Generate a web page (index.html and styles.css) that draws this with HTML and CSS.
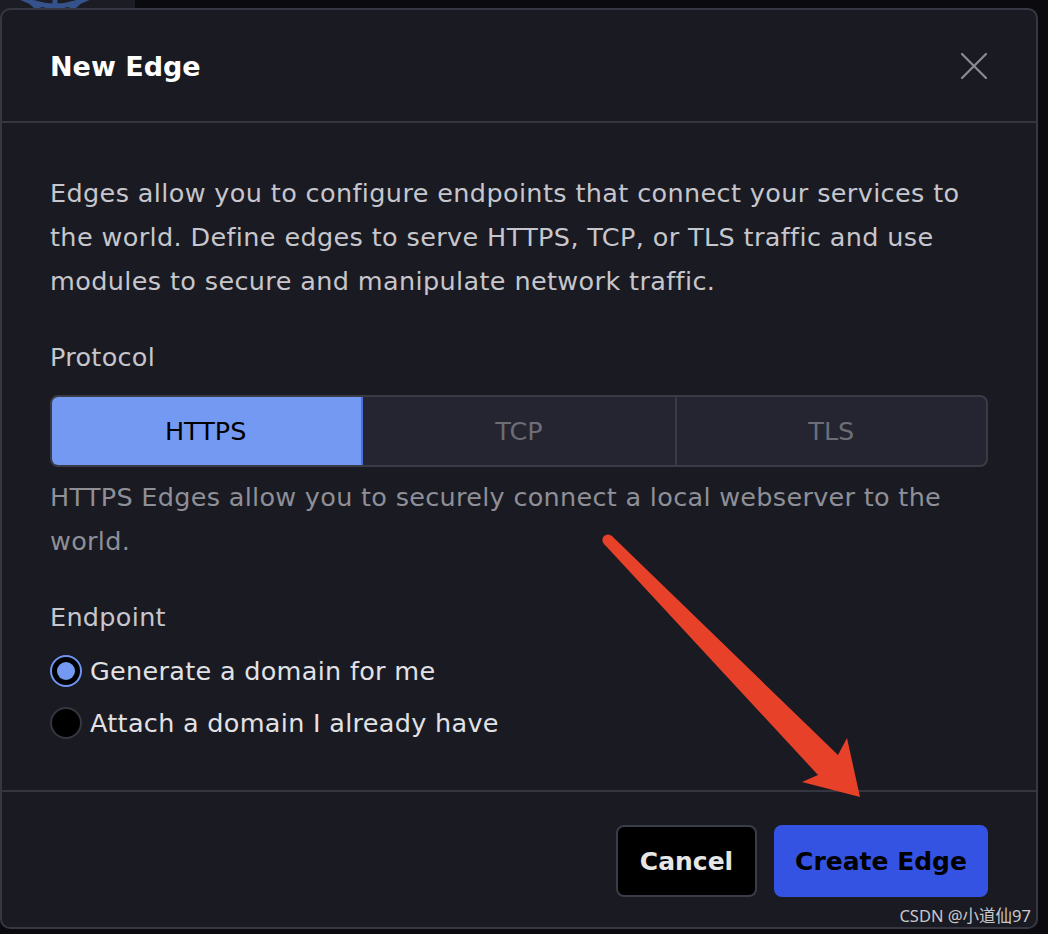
FILE: index.html
```html
<!DOCTYPE html>
<html lang="en">
<head>
<meta charset="utf-8">
<title>New Edge</title>
<link rel="stylesheet" href="styles.css">
</head>
<body>
<div class="backdrop-left">
  <svg class="bg-logo" width="120" height="10" viewBox="0 0 120 10">
    <path d="M22 -6 L40 10 M55 -14 L55 10 M88 -6 L70 10 M18 -4 Q55 16 92 -4" stroke="#35528a" stroke-width="5" fill="none"/>
  </svg>
</div>
<div class="modal">
  <header class="modal-header">
    <h1 class="title">New Edge</h1>
    <svg class="close" width="26" height="26" viewBox="0 0 26 26">
      <path d="M1 1 L25 25 M25 1 L1 25" stroke="#8b8b91" stroke-width="2.2" stroke-linecap="round"/>
    </svg>
  </header>
  <section class="modal-body">
    <p class="intro">Edges allow you to configure endpoints that connect your services to the world. Define edges to serve HTTPS, TCP, or TLS traffic and use modules to secure and manipulate network traffic.</p>
    <div class="label">Protocol</div>
    <div class="segmented">
      <div class="seg seg-active">HTTPS</div>
      <div class="seg">TCP</div>
      <div class="seg">TLS</div>
    </div>
    <p class="help">HTTPS Edges allow you to securely connect a local webserver to the world.</p>
    <div class="label label-endpoint">Endpoint</div>
    <div class="radio-list">
      <div class="radio-row">
        <span class="radio radio-on"><span class="dot"></span></span>
        <span class="radio-text">Generate a domain for me</span>
      </div>
      <div class="radio-row">
        <span class="radio"></span>
        <span class="radio-text">Attach a domain I already have</span>
      </div>
    </div>
  </section>
  <footer class="modal-footer">
    <button class="btn btn-cancel">Cancel</button>
    <button class="btn btn-primary">Create Edge</button>
  </footer>
</div>
<div class="watermark">CSDN @小道仙97</div>
<svg class="arrow" width="1048" height="934" viewBox="0 0 1048 934">
  <circle cx="608" cy="540" r="5.6" fill="#e8412a"/>
  <polygon points="611.9,536 838,755 847,738 860,797 802,782 818,775 604.1,544" fill="#e8412a"/>
</svg>
</body>
</html>
```
FILE: styles.css
```css
* { box-sizing: border-box; }
html, body { margin: 0; padding: 0; }
body {
  width: 1048px;
  height: 934px;
  overflow: hidden;
  background: #0b0b0f;
  font-family: "DejaVu Sans", "Noto Sans", sans-serif;
  position: relative;
  padding-top: 8px;
}
.backdrop-left {
  position: absolute;
  left: 0; top: 0;
  width: 135px; height: 20px;
  background: #1b1c24;
}
.bg-logo { position: absolute; left: 0; top: 0; }
.modal {
  position: relative;
  width: 1038px;
  height: 921px;
  background: #1a1a22;
  border: 2px solid #353742;
  border-radius: 10px;
  display: flex;
  flex-direction: column;
}
.modal-header {
  height: 113px;
  flex: none;
  display: flex;
  align-items: center;
  justify-content: space-between;
  padding: 2px 49px 0 48px;
  border-bottom: 2px solid #33353f;
}
.title {
  margin: 0;
  font-size: 27px;
  font-weight: 700;
  color: #ffffff;
}
.close { display: block; margin-top: -2px; }
.modal-body {
  flex: 1;
  padding: 48px 48px 0 48px;
  border-bottom: 2px solid #33353f;
}
.intro {
  margin: 0;
  font-size: 25.5px;
  line-height: 44px;
  letter-spacing: 0.37px;
  color: #c6c6cc;
}
.label {
  margin-top: 32px;
  font-size: 25.5px;
  line-height: 44px;
  letter-spacing: 0.3px;
  color: #c6c6cc;
}
.segmented {
  margin-top: 16px;
  height: 72px;
  display: grid;
  grid-template-columns: 1fr 1fr 1fr;
  border: 2px solid #393b47;
  border-radius: 8px;
  background: #242530;
  overflow: hidden;
}
.seg {
  display: flex;
  align-items: center;
  justify-content: center;
  font-size: 25.5px;
  color: #6c6d77;
}
.seg + .seg { border-left: 2px solid #393b47; }
.seg-active {
  background: #7399f2;
  color: #000000;
  border-right: 2px solid #4d6fd8;
  margin: -2px 0 -2px -2px;
}
.seg-active + .seg { border-left: none; }
.help {
  margin: 8px 0 0 0;
  font-size: 25.5px;
  line-height: 44px;
  letter-spacing: 0.3px;
  color: #8e8f97;
}
.label-endpoint { margin-top: 32px; }
.radio-list {
  margin-top: 6px;
  display: flex;
  flex-direction: column;
}
.radio-row {
  height: 52px;
  display: flex;
  align-items: center;
  gap: 8px;
}
.radio {
  width: 32px;
  height: 32px;
  border-radius: 50%;
  background: #000000;
  border: 2px solid #343640;
  flex: none;
  display: flex;
  align-items: center;
  justify-content: center;
}
.radio-on { border-color: #6f94f0; }
.dot {
  width: 18px;
  height: 18px;
  border-radius: 50%;
  background: #7399f2;
}
.radio-text {
  font-size: 25.5px;
  letter-spacing: 0.3px;
  color: #e2e2e6;
}
.modal-footer {
  height: 135px;
  flex: none;
  display: flex;
  justify-content: flex-end;
  align-items: flex-start;
  gap: 17px;
  padding: 33px 48px 0 0;
}
.btn {
  height: 72px;
  border-radius: 8px;
  font-family: inherit;
  font-size: 25px;
  font-weight: 700;
  cursor: pointer;
}
.btn-cancel {
  width: 141px;
  background: #000000;
  color: #e6e6e6;
  border: 2px solid #3a3c47;
}
.btn-primary {
  width: 214px;
  background: #3553e2;
  color: #000000;
  border: none;
}
.watermark {
  position: absolute;
  right: 17px;
  top: 903px;
  font-family: "Noto Sans", "Noto Sans CJK SC", sans-serif;
  font-size: 16.5px;
  color: #c8c8cc;
}
.arrow { position: absolute; left: 0; top: 0; pointer-events: none; }
```
